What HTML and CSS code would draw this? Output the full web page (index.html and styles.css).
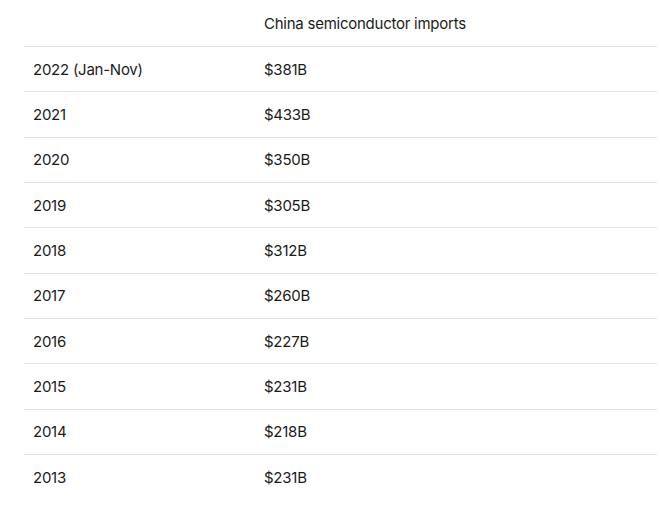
FILE: index.html
```html
<!DOCTYPE html>
<html>
<head>
<meta charset="utf-8">
<link rel="stylesheet" href="styles.css">
</head>
<body>
<table class="data">
  <thead>
    <tr><th></th><th>China semiconductor imports</th></tr>
  </thead>
  <tbody>
    <tr><td>2022 (Jan-Nov)</td><td>$381B</td></tr>
    <tr><td>2021</td><td>$433B</td></tr>
    <tr><td>2020</td><td>$350B</td></tr>
    <tr><td>2019</td><td>$305B</td></tr>
    <tr><td>2018</td><td>$312B</td></tr>
    <tr><td>2017</td><td>$260B</td></tr>
    <tr><td>2016</td><td>$227B</td></tr>
    <tr><td>2015</td><td>$231B</td></tr>
    <tr><td>2014</td><td>$218B</td></tr>
    <tr><td>2013</td><td>$231B</td></tr>
  </tbody>
</table>
</body>
</html>
```
FILE: styles.css
```css
html, body {
  margin: 0;
  padding: 0;
  background: #fff;
}
body {
  padding-left: 24px;
  font-family: Inter, "Liberation Sans", sans-serif;
  font-size: 15px;
  letter-spacing: -0.25px;
  color: #1b1b1b;
}
.data {
  border-collapse: collapse;
  width: 633px;
}
.data th,
.data td {
  text-align: left;
  font-weight: 400;
  padding: 0 9px;
  vertical-align: middle;
}
.data th {
  height: 46px;
  border-bottom: 1px solid #e2e2e2;
}
.data td {
  height: 44.33px;
  border-bottom: 1px solid #e2e2e2;
}
.data tbody tr:last-child td {
  border-bottom: none;
}
.data th:first-child,
.data td:first-child {
  width: 213px;
}
```
